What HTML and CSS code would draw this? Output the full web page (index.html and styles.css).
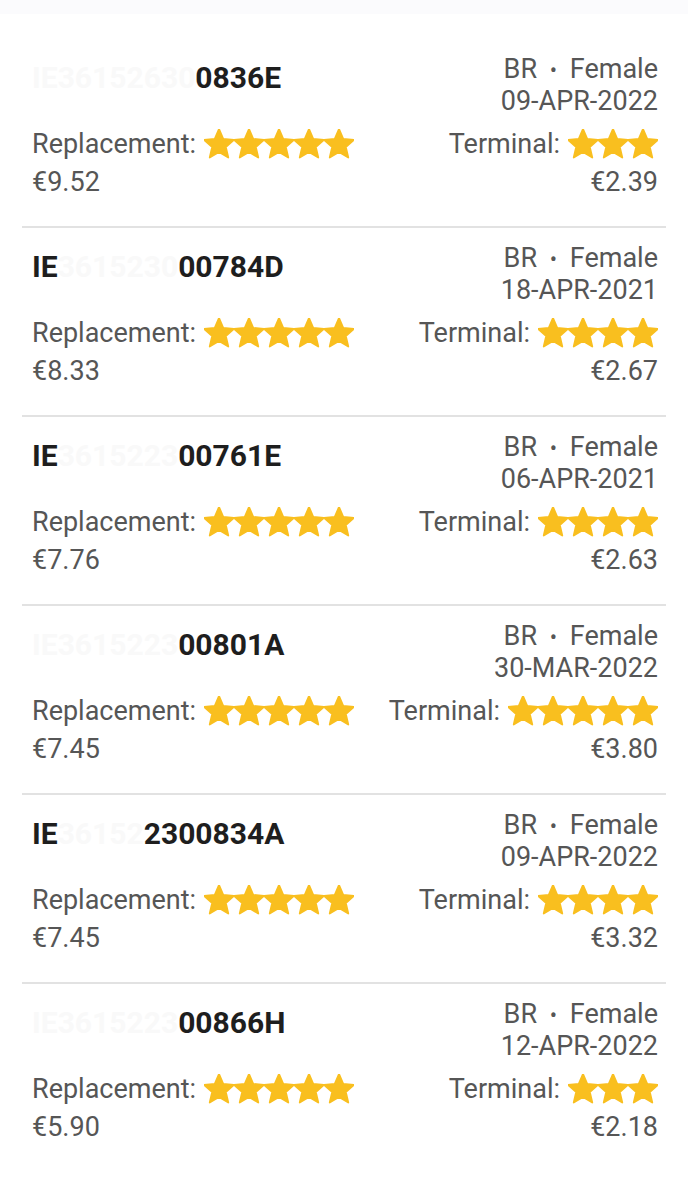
FILE: index.html
```html
<!DOCTYPE html>
<html lang="en">
<head>
    <meta charset="UTF-8">
    <meta name="viewport" content="width=device-width, initial-scale=1.0">
    <title>Animals</title>
    <link rel="stylesheet" href="styles.css">
</head>
<body>
    <div class="topbar"></div>

    <div class="list">
        <div class="animal">
            <div class="head">
                <div class="tag"><span class="masked">IE36152630</span>0836E</div>
                <div class="meta">
                    <div>BR <span class="dot">•</span> Female</div>
                    <div>09-APR-2022</div>
                </div>
            </div>
            <div class="scores">
                <div class="score">Replacement: <span class="stars" data-n="5"></span></div>
                <div class="score">Terminal: <span class="stars" data-n="3"></span></div>
            </div>
            <div class="prices">
                <div>€9.52</div>
                <div>€2.39</div>
            </div>
        </div>

        <div class="animal">
            <div class="head">
                <div class="tag">IE<span class="masked">3615230</span>00784D</div>
                <div class="meta">
                    <div>BR <span class="dot">•</span> Female</div>
                    <div>18-APR-2021</div>
                </div>
            </div>
            <div class="scores">
                <div class="score">Replacement: <span class="stars" data-n="5"></span></div>
                <div class="score">Terminal: <span class="stars" data-n="4"></span></div>
            </div>
            <div class="prices">
                <div>€8.33</div>
                <div>€2.67</div>
            </div>
        </div>

        <div class="animal">
            <div class="head">
                <div class="tag">IE<span class="masked">3615223</span>00761E</div>
                <div class="meta">
                    <div>BR <span class="dot">•</span> Female</div>
                    <div>06-APR-2021</div>
                </div>
            </div>
            <div class="scores">
                <div class="score">Replacement: <span class="stars" data-n="5"></span></div>
                <div class="score">Terminal: <span class="stars" data-n="4"></span></div>
            </div>
            <div class="prices">
                <div>€7.76</div>
                <div>€2.63</div>
            </div>
        </div>

        <div class="animal">
            <div class="head">
                <div class="tag"><span class="masked">IE3615223</span>00801A</div>
                <div class="meta">
                    <div>BR <span class="dot">•</span> Female</div>
                    <div>30-MAR-2022</div>
                </div>
            </div>
            <div class="scores">
                <div class="score">Replacement: <span class="stars" data-n="5"></span></div>
                <div class="score">Terminal: <span class="stars" data-n="5"></span></div>
            </div>
            <div class="prices">
                <div>€7.45</div>
                <div>€3.80</div>
            </div>
        </div>

        <div class="animal">
            <div class="head">
                <div class="tag">IE<span class="masked">36152</span>2300834A</div>
                <div class="meta">
                    <div>BR <span class="dot">•</span> Female</div>
                    <div>09-APR-2022</div>
                </div>
            </div>
            <div class="scores">
                <div class="score">Replacement: <span class="stars" data-n="5"></span></div>
                <div class="score">Terminal: <span class="stars" data-n="4"></span></div>
            </div>
            <div class="prices">
                <div>€7.45</div>
                <div>€3.32</div>
            </div>
        </div>

        <div class="animal last">
            <div class="head">
                <div class="tag"><span class="masked">IE3615223</span>00866H</div>
                <div class="meta">
                    <div>BR <span class="dot">•</span> Female</div>
                    <div>12-APR-2022</div>
                </div>
            </div>
            <div class="scores">
                <div class="score">Replacement: <span class="stars" data-n="5"></span></div>
                <div class="score">Terminal: <span class="stars" data-n="3"></span></div>
            </div>
            <div class="prices">
                <div>€5.90</div>
                <div>€2.18</div>
            </div>
        </div>
    </div>

    <script>
        // fill each rating with its star icons
        const star = '<svg viewBox="2 2 20 20" width="30" height="30"><path d="M12 17.27L18.18 21l-1.64-7.03L22 9.24l-7.19-.61L12 2 9.19 8.63 2 9.24l5.46 4.73L5.82 21z"/></svg>';
        document.querySelectorAll('.stars').forEach(function(el) {
            el.innerHTML = star.repeat(Number(el.dataset.n));
        });
    </script>
</body>
</html>
```

FILE: styles.css
```css
body {
    margin: 0;
    background: #fff;
    font-family: Roboto, 'Liberation Sans', sans-serif;
    font-size: 27px;
    color: #565656;
}
.topbar {
    height: 14px;
    background: #fbfbfd;
}
.list {
    padding-top: 25px;
}
.animal {
    margin: 0 22px;
    padding: 15px 8px 24px 10px;
    border-bottom: 2px solid #e2e2e2;
}
.animal.last {
    border-bottom: none;
}
.head {
    display: flex;
    justify-content: space-between;
}
.tag {
    margin-top: 8px;
    font-size: 30px;
    line-height: 31px;
    font-weight: bold;
    color: #1e1e1e;
}
.masked {
    color: #f9f9f9;
}
.meta {
    text-align: right;
    line-height: 31px;
}
.dot {
    margin: 0 6px;
    font-size: 0.8em;
}
.scores {
    display: flex;
    justify-content: space-between;
    margin-top: 9px;
    height: 36px;
}
.score {
    display: flex;
    align-items: center;
    gap: 8px;
}
.stars {
    display: flex;
}
.stars svg {
    display: block;
    fill: #f9bf1f;
    stroke: #f9bf1f;
    stroke-width: 1.2;
    stroke-linejoin: round;
}
.prices {
    display: flex;
    justify-content: space-between;
    line-height: 40px;
}
```
